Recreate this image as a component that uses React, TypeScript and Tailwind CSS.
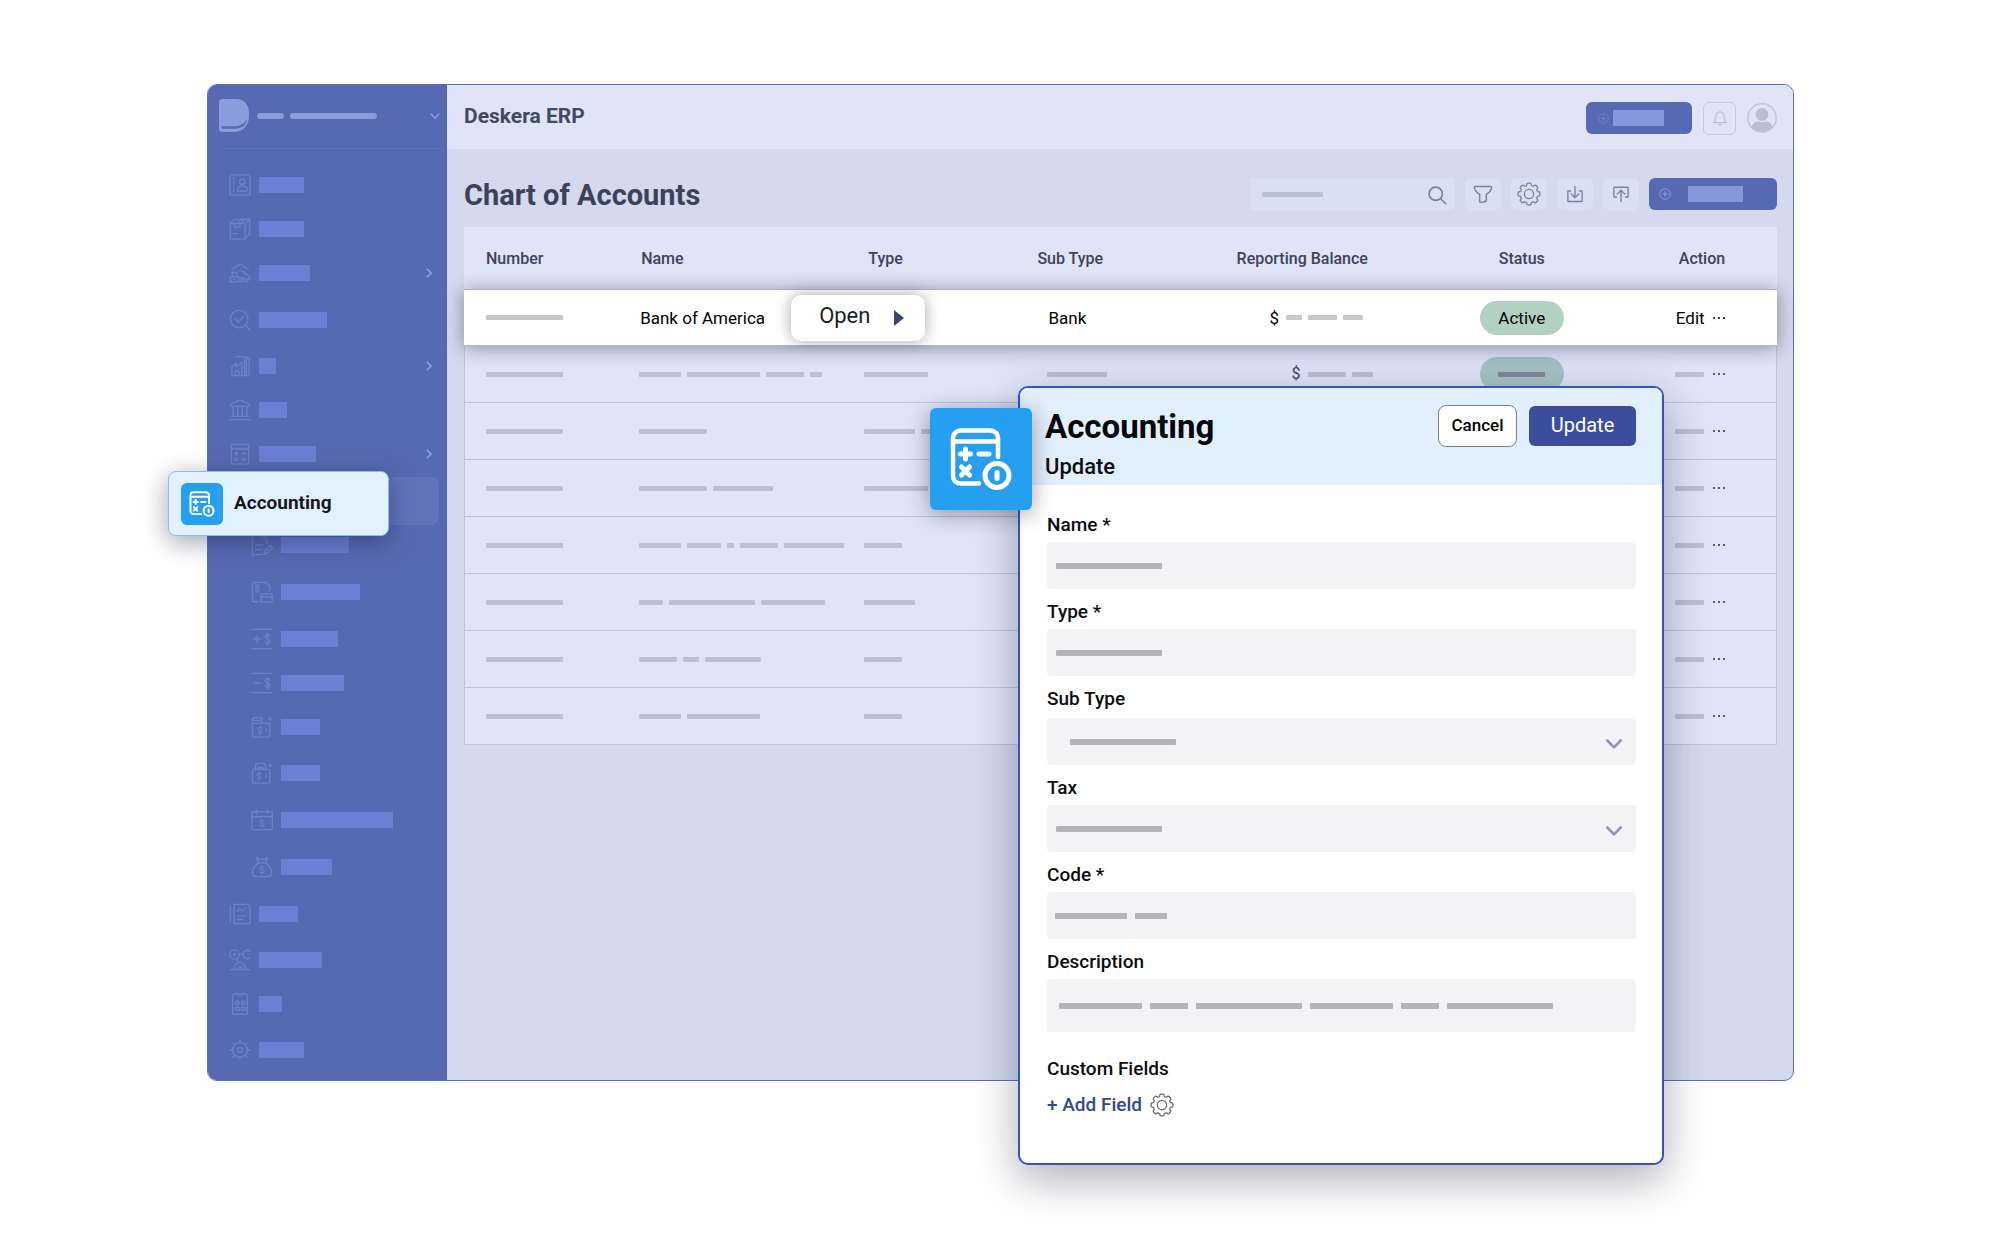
import type { ReactNode } from "react";

function Icon({ children, className = "size-[22px]", width = 1.5 }: { children: ReactNode; className?: string; width?: number }) {
  return (
    <svg
      viewBox="0 0 24 24"
      className={"shrink-0 " + className}
      fill="none"
      stroke="currentColor"
      strokeWidth={width}
      strokeLinecap="round"
      strokeLinejoin="round"
      aria-hidden="true"
    >
      {children}
    </svg>
  );
}

const dollar = (x: number, y: number) => (
  <path d={`M${x + 2} ${y - 2.2}c-1-1.4-4-1.2-4 .5s4 1.4 4 3.2-3 2-4 .5M${x} ${y - 4.5}v1.3M${x} ${y + 3}v1.3`} />
);

const contactIcon = (
  <>
    <rect x="1" y="1" width="22" height="22" rx="1.5" />
    <path d="M5 4v2M5 8v2M5 12v2M5 16v3" />
    <circle cx="14.5" cy="8.5" r="3" />
    <path d="M9.500 18.500v-2.500a3 3 0 0 1 3-2.500h4a3 3 0 0 1 3 2.500v2.500z" />
  </>
);
const boxIcon = (
  <>
    <rect x="1.500" y="6" width="16" height="17" rx="1" />
    <path d="M1.500 6 6 1.500h16.500L17.500 6M22.500 1.500v16L17.500 23M9 6l4-4.500M13 6l4-4.500M4.500 17h5" />
    <path d="M6 6v4h6V6" />
  </>
);
const assetsIcon = (
  <>
    <path d="M3 8l9-6 9 6" />
    <path d="M1 21.500v-5h2.500v-5h5v5H11v5zM3.500 16.500h5M5 19h1.500" />
    <path d="M11.500 10h4l3 3.500 3.500 1.500c1 .5 1 4 0 4h-1M13 17h4" />
    <circle cx="19" cy="20" r="1.800" />
    <circle cx="14" cy="20" r="1.500" />
  </>
);
const searchCheckIcon = (
  <>
    <circle cx="11" cy="11" r="9.500" />
    <path d="M18 18l5 5M6.500 11l3.500 3.500 6-6.500" />
  </>
);
const factoryIcon = (
  <path d="M3 22.500V13l5-4v4l6-5v14.500zM8 2.500c2-2 4-.5 6-.5h5v20.500h3V3.500h-3M17 5v17.500h-3M7 22.500v-5h4v5" />
);
const bankIcon = (
  <path d="M1 22.500h22M3 19h18M4.500 18.500v-10M9.500 18.500v-10M14.500 18.500v-10M19.500 18.500v-10M1 6.500c0-1 6-2.500 8-4 1-1.500 5-1.500 6 0 2 1.500 8 3 8 4s-1 1.500-2 1.500H3C2 8 1 7.500 1 6.500z" />
);
const calcIcon = (
  <>
    <rect x="2.500" y="1.500" width="19" height="21.500" rx="1" />
    <path d="M2.500 6.500h19M6 11.500h4M8 9.500v4M14 11.500h4M6.500 16.500l3 3M9.500 16.500l-3 3M14 18h4M16 16v4" />
  </>
);
const noteIcon = (
  <path d="M1.500 23V2.500a1 1 0 0 1 1-1h10l5 5v4M1.500 22.500h10M5 12h8M5 17h6M14 22.500l1-4 6-6 2.500 2.500-6 6z" />
);
const docCardIcon = (
  <>
    <path d="M8 22.500H3.500a2 2 0 0 1-2-2v-17a2 2 0 0 1 2-2h13l4 4V11" />
    {dollar(7, 8)}
    <rect x="11" y="14" width="12" height="9" rx="1" />
    <path d="M11 17.500h12" />
  </>
);
const creditIcon = (
  <path d="M1 1.500h22M1 22.500h22M3 12h7M6.500 8.500v7M21 9c-1-2.500-5.500-2-5.500.5s5.500 2.500 5.500 5-4.500 3-5.500.5M18.200 5.500v13.500" />
);
const debitIcon = (
  <path d="M1 1.500h22M1 22.500h22M3 12h7M21 9c-1-2.500-5.500-2-5.500.5s5.500 2.500 5.500 5-4.500 3-5.500.5M18.200 5.500v13.500" />
);
const walletIcon = (
  <>
    <rect x="1.500" y="8" width="19" height="15" rx="1.500" />
    <path d="M1.500 9V3.500l2-1.500H12v6M4 5h6M16.500 14v3M21 1.500v3M19.500 3h3" />
    {dollar(10, 15.5)}
  </>
);
const bagIcon = (
  <>
    <rect x="1.500" y="8" width="19" height="15" rx="1.500" />
    <path d="M5 8V3l2-1.500h7L16 3v5M8 8V6h5v2M16.500 14v3M21 2.500v3M19.500 4h3" />
    {dollar(9, 15.5)}
  </>
);
const calendarIcon = (
  <>
    <rect x="0.800" y="3" width="22.500" height="19.500" rx="1.500" />
    <path d="M.8 8.500h22.500M6 1v4M18 1v4" />
    {dollar(12, 15.5)}
  </>
);
const moneyBagIcon = (
  <>
    <path d="M6 1.500l2.500 2h7l2.500-2-2 6H8zM8 7.500c-3 2.500-6.500 7-6.500 10.500 0 3 2 4.500 4.500 4.500h12c2.500 0 4.500-1.500 4.500-4.500 0-3.500-3.500-8-6.500-10.500" />
    {dollar(12, 15)}
  </>
);
const reportIcon = (
  <>
    <path d="M1.500 3v18" />
    <path d="M5.500 1.500h15l2.500 3v18H5.500zM9 9l2.500-2.500 3 2 4-3M9 14h10M9 18h6" />
  </>
);
const robotIcon = (
  <>
    <circle cx="6" cy="6" r="5" />
    <circle cx="6" cy="6" r="1" />
    <path d="M11 6h4M23 2.500c-3-2.500-7.500-.5-7.500 3.500s4.500 6 7.500 3.500M1 22.500h22M6 22c0-5 3-7.500 6-7.500s6 2.500 6 7.500M8 11l3 4M10 22c0-4 4-4 4 0" />
  </>
);
const phoneIcon = (
  <>
    <rect x="4" y="0.800" width="16" height="22.500" rx="2" />
    <path d="M10 3.500h4" />
    <rect x="7" y="9" width="4" height="3.500" rx="1" />
    <rect x="13.500" y="9" width="4" height="3.500" rx="1" />
    <rect x="7" y="15.500" width="4" height="3.500" rx="1" />
    <rect x="13.500" y="15.500" width="4" height="3.500" rx="1" />
  </>
);
const sunGearIcon = (
  <>
    <circle cx="12" cy="12" r="8" />
    <circle cx="12" cy="12" r="2.800" />
    <path d="M12 1v3M12 20v3M1 12h3M20 12h3M4.200 4.200l2.200 2.200M17.600 17.600l2.200 2.200M19.800 4.200l-2.200 2.200M6.400 17.600l-2.200 2.200" />
  </>
);

type NavItem = { label: string; icon?: ReactNode; bar?: string; gap: string; sub?: boolean; more?: boolean; active?: boolean };

const navItems: NavItem[] = [
  { label: "Contacts", icon: contactIcon, bar: "w-[45px]", gap: "" },
  { label: "Products", icon: boxIcon, bar: "w-[45px]", gap: "mt-6" },
  { label: "Assets", icon: assetsIcon, bar: "w-[51px]", gap: "mt-6", more: true },
  { label: "Quality", icon: searchCheckIcon, bar: "w-[68px]", gap: "mt-[27px]" },
  { label: "Manufacturing", icon: factoryIcon, bar: "w-[17px]", gap: "mt-[26px]", more: true },
  { label: "Bank", icon: bankIcon, bar: "w-[28px]", gap: "mt-6" },
  { label: "Ledger", icon: calcIcon, bar: "w-[57px]", gap: "mt-6", more: true },
  { label: "Accounting", gap: "mt-[27px]", active: true },
  { label: "Journal", icon: noteIcon, bar: "w-[68px]", gap: "mt-6", sub: true },
  { label: "Statements", icon: docCardIcon, bar: "w-[79px]", gap: "mt-[27px]", sub: true },
  { label: "Credit notes", icon: creditIcon, bar: "w-[57px]", gap: "mt-[27px]", sub: true },
  { label: "Debit notes", icon: debitIcon, bar: "w-[63px]", gap: "mt-6", sub: true },
  { label: "Deposits", icon: walletIcon, bar: "w-[39px]", gap: "mt-6", sub: true },
  { label: "Expenses", icon: bagIcon, bar: "w-[39px]", gap: "mt-[26px]", sub: true },
  { label: "Scheduled payments", icon: calendarIcon, bar: "w-[112px]", gap: "mt-[27px]", sub: true },
  { label: "Budget", icon: moneyBagIcon, bar: "w-[51px]", gap: "mt-[27px]", sub: true },
  { label: "Reports", icon: reportIcon, bar: "w-[39px]", gap: "mt-[27px]" },
  { label: "Automation", icon: robotIcon, bar: "w-[63px]", gap: "mt-[26px]" },
  { label: "Apps", icon: phoneIcon, bar: "w-[23px]", gap: "mt-6" },
  { label: "Settings", icon: sunGearIcon, bar: "w-[45px]", gap: "mt-[26px]" },
];

function LedgerGlyph({ className }: { className: string }) {
  return (
    <svg viewBox="0 0 102 102" className={className} fill="none" stroke="#fff" strokeWidth="4.500" strokeLinecap="round" strokeLinejoin="round" aria-hidden="true">
      <path d="M68 49V30a7.500 7.500 0 0 0-7.500-7.500h-30A7.500 7.500 0 0 0 23 30v38a7.500 7.500 0 0 0 7.500 7.500H49" />
      <path d="M23 33.500h45" />
      <path d="M30.500 46h10M35.500 41v10M49 46h10M31.500 59l8 8M39.500 59l-8 8" strokeWidth="5" />
      <circle cx="67" cy="67.500" r="12" strokeWidth="5" />
      <path d="M67 64.500v6" strokeWidth="5" />
    </svg>
  );
}

function polar(radius: number, degrees: number) {
  const a = (degrees * Math.PI) / 180;
  return `${(12 + radius * Math.cos(a)).toFixed(2)} ${(12 + radius * Math.sin(a)).toFixed(2)}`;
}

const gearOutline =
  Array.from({ length: 8 }, (_, k) => {
    const t = k * 45;
    return `${k === 0 ? "M" : "L"}${polar(9, t - 15)}Q${polar(10.8, t - 13)} ${polar(11, t - 7)}L${polar(11, t + 7)}Q${polar(10.8, t + 13)} ${polar(9, t + 15)}Q${polar(8.3, t + 22.5)} ${polar(9, t + 30)}`;
  }).join("") + "Z";

function Gear({ className }: { className: string }) {
  return (
    <Icon className={className} width={1.3}>
      <path d={gearOutline} />
      <circle cx="12" cy="12" r="4.600" />
    </Icon>
  );
}

function PlusCircle({ className }: { className: string }) {
  return (
    <Icon className={className} width={2}>
      <circle cx="12" cy="12" r="10.500" />
      <path d="M12 7v10M7 12h10" />
    </Icon>
  );
}

function Sidebar() {
  return (
    <aside className="w-[239px] shrink-0 rounded-l-[9px] bg-[#5869b3] pb-5">
      <div className="ml-[11px] mr-[7px] flex h-16 items-center border-b border-[#6272ba] pb-0.5">
        <svg viewBox="0 0 30 33" className="h-[33px] w-[30px]" aria-label="Deskera" role="img">
          <path d="M3 0h14.500C24.500 0 30 6 30 13.500V17c0 9.500-6 16-15 16H3a3 3 0 0 1-3-3V3a3 3 0 0 1 3-3z" fill="#8b9bdd" />
          <path d="M2.500 27.300h14c5 0 9-3 11.500-7-.5 6-5.500 9.500-12.500 9.500H4.500c-2 0-2.500-1-2-2.500z" fill="#5869b3" />
        </svg>
        <span className="ml-2 h-1.5 w-[27px] rounded-full bg-[#8b9bdd]" />
        <span className="ml-1.5 h-1.5 w-[87px] rounded-full bg-[#8b9bdd]" />
        <button aria-label="Switch company" className="ml-auto text-[#8b9bdd]">
          <svg viewBox="0 0 10 6" className="h-1.5 w-2.5" fill="none" stroke="currentColor" strokeWidth="1.400" aria-hidden="true">
            <path d="M.7.7 5 5 9.300.7" />
          </svg>
        </button>
      </div>
      <nav aria-label="Main" className="pt-[26px]">
        <ul>
          {navItems.map((item) =>
            item.active ? (
              <li key={item.label} className={"relative h-5 " + item.gap}>
                <span className="absolute -top-3.5 left-3 right-2 h-12 rounded-lg bg-[#6373bb]" />
                <a
                  href="#accounting"
                  aria-current="page"
                  className="absolute -left-10 -top-5 z-20 flex h-[65px] w-[221px] items-center gap-[11px] rounded-lg border border-[#8fbbee] bg-[#e3f0fe] pl-3 text-[19px] font-bold text-[#15181f] shadow-[0_6px_26px_rgba(20,20,50,0.4)]"
                >
                  <span className="flex size-[42px] items-center justify-center rounded-md bg-[#269ff0]">
                    <LedgerGlyph className="size-[46px]" />
                  </span>
                  Accounting
                </a>
              </li>
            ) : (
              <li key={item.label} className={item.gap}>
                <a
                  href="#nav"
                  aria-label={item.label}
                  className={"flex h-5 items-center gap-2 pr-[15px] text-[#6f80ca] " + (item.sub ? "pl-[43px]" : "pl-[21px]")}
                >
                  <Icon>{item.icon}</Icon>
                  <span className={"h-4 bg-[#6c7fd3] " + item.bar} />
                  {item.more && (
                    <svg viewBox="0 0 6 10" className="ml-auto h-2.5 w-1.5" fill="none" stroke="#8f9fe2" strokeWidth="1.600" aria-hidden="true">
                      <path d="M.8.8 5 5 .8 9.200" />
                    </svg>
                  )}
                </a>
              </li>
            ),
          )}
        </ul>
      </nav>
    </aside>
  );
}

function TopBar() {
  return (
    <header className="flex h-16 items-center rounded-tr-[9px] bg-[#dfe4f7] pl-[17px] pr-4 pt-0.5">
      <p className="pb-1 text-[21px] leading-6 font-bold text-[#444962]">Deskera ERP</p>
      <button aria-label="Create" className="ml-auto flex h-8 w-[106px] items-center gap-1 rounded-md bg-[#5869b3] pl-3 text-[#7283cc]">
        <PlusCircle className="size-[11px]" />
        <span className="h-4 w-[51px] bg-[#8797dc]" />
      </button>
      <button aria-label="Notifications" className="ml-[11px] flex size-[33px] items-center justify-center rounded-md border border-[#c3c8dd] text-[#bbc0d6]">
        <Icon className="size-4" width={1.8}>
          <path d="M2.500 19h19c-2.500-2-3-4-3-9S16 3 12 3s-6.500 2-6.500 7-.5 7-3 9zM12 3V1M10 22h4" />
        </Icon>
      </button>
      <button aria-label="Account" className="ml-[11px]">
        <svg viewBox="0 0 30 30" className="size-[30px]" aria-hidden="true">
          <circle cx="15" cy="15" r="14.200" fill="none" stroke="#bfc4d8" strokeWidth="1.500" />
          <circle cx="15" cy="11.500" r="6.500" fill="#b9bed3" />
          <path d="M4.500 24c1.500-5 5-6 7-5.500 2 1 5 1 7 0 2-.5 5.500.5 7 5.500a13.800 13.800 0 0 1-21 0z" fill="#b9bed3" />
        </svg>
      </button>
    </header>
  );
}

function ToolButton({ label, children }: { label: string; children: ReactNode }) {
  return (
    <button aria-label={label} className="flex h-8 w-9 items-center justify-center rounded-md bg-[#dae0f4] text-[#7d829b]">
      {children}
    </button>
  );
}

function Toolbar() {
  return (
    <div className="flex items-center gap-2.5">
      <h1 className="mr-auto pt-0.5 text-[29px] leading-[30px] font-bold text-[#3e4259]">Chart of Accounts</h1>
      <div className="relative w-[205px]">
        <input aria-label="Search accounts" className="block h-8 w-full rounded-sm bg-[#dae0f4] px-3 outline-none" />
        <span className="pointer-events-none absolute left-3 top-3.5 h-[5px] w-[61px] rounded-[1px] bg-[#babfd4]" />
        <span className="pointer-events-none absolute right-2 top-[7px] text-[#7d829b]">
          <Icon className="size-5" width={2}>
            <circle cx="10.500" cy="10.500" r="8" />
            <path d="M16.500 16.500l6 6" />
          </Icon>
        </span>
      </div>
      <ToolButton label="Filter">
        <Icon className="size-5" width={1.8}>
          <path d="M2.500 3h19a.8.8 0 0 1 .8.800c0 4-2.300 6-6.300 8.700V20c-2.500 2-6 2.500-8 1.500v-9C4 9.800 1.700 7.800 1.700 3.800a.8.8 0 0 1 .8-.8z" />
        </Icon>
      </ToolButton>
      <ToolButton label="Settings">
        <Gear className="size-6" />
      </ToolButton>
      <ToolButton label="Download">
        <Icon className="size-[18px]" width={1.8}>
          <path d="M6 8H2.500v14h19V8H18M12 2v15M7 12l5 5 5-5" />
        </Icon>
      </ToolButton>
      <ToolButton label="Upload">
        <Icon className="size-[18px]" width={1.8}>
          <path d="M6 16H2.500V3h19v13H18M12 22V7M7 12l5-5 5 5" />
        </Icon>
      </ToolButton>
      <button aria-label="New account" className="flex h-8 w-32 items-center gap-[17px] rounded-md bg-[#5869b3] pl-2.5 text-[#8b9bdd]">
        <PlusCircle className="size-3" />
        <span className="h-4 w-[55px] bg-[#8797dc]" />
      </button>
    </div>
  );
}

function Bars({ widths, className }: { widths: string[]; className: string }) {
  return (
    <span className="flex items-center gap-1.5">
      {widths.map((w, i) => (
        <span key={i} className={"h-[5px] rounded-[1px] " + w + " " + className} />
      ))}
    </span>
  );
}

const rows: { name: string[]; type: string[] }[] = [
  { name: ["w-[42px]", "w-[73px]", "w-[38px]", "w-3"], type: ["w-16"] },
  { name: ["w-[68px]"], type: ["w-[51px]", "w-[38px]"] },
  { name: ["w-[68px]", "w-[60px]"], type: ["w-16"] },
  { name: ["w-[42px]", "w-[34px]", "w-[7px]", "w-[38px]", "w-[60px]"], type: ["w-[38px]"] },
  { name: ["w-6", "w-[86px]", "w-16"], type: ["w-[51px]"] },
  { name: ["w-[38px]", "w-4", "w-14"], type: ["w-[38px]"] },
  { name: ["w-[42px]", "w-[73px]"], type: ["w-[38px]"] },
];

const muted = "bg-[#babfd4]";

function Dots() {
  return (
    <svg viewBox="0 0 12 2" className="h-0.5 w-3" fill="currentColor" aria-hidden="true">
      <circle cx="1" cy="1" r="1" />
      <circle cx="6" cy="1" r="1" />
      <circle cx="11" cy="1" r="1" />
    </svg>
  );
}

function AccountsTable() {
  return (
    <table className="mt-[17px] w-full table-fixed border-separate border-spacing-0 bg-[#dfe4f7] text-left text-black">
      <colgroup>
        <col className="w-[175px]" />
        <col className="w-[225px]" />
        <col className="w-[165px]" />
        <col className="w-[207px]" />
        <col className="w-[203px]" />
        <col className="w-[164px]" />
        <col className="w-[173px]" />
      </colgroup>
      <thead>
        <tr className="h-[62px] text-base text-[#3e4259] [&>th]:p-0 [&>th]:pt-0.5 [&>th]:font-medium">
          <th className="[&&]:pl-[22px]">Number</th>
          <th className="[&&]:pl-0.5">Name</th>
          <th className="[&&]:pl-1">Type</th>
          <th className="[&&]:pl-2">Sub Type</th>
          <th>Reporting Balance</th>
          <th className="text-center">Status</th>
          <th className="[&&]:pl-[75px]">Action</th>
        </tr>
      </thead>
      <tbody>
        <tr className="relative z-10 h-[57px] bg-white text-[17px] leading-6 shadow-[0_2px_18px_rgba(30,30,70,0.45)] [&>td]:border-y [&>td]:border-[#b3b4c6] [&>td]:p-0">
          <td className="[&&]:pl-[22px]">
            <Bars widths={["w-[77px]"]} className="bg-[#c6c6c6]" />
          </td>
          <td className="relative whitespace-nowrap [&&]:pl-px">
            Bank of America
            <button className="absolute left-[152px] top-[5px] flex h-[46px] w-[134px] items-center justify-between rounded-[10px] bg-white pb-1 pl-7 pr-[21px] text-[22px] text-[#1b1d22] shadow-[0_0_16px_rgba(0,0,0,0.35)]">
              Open
              <svg viewBox="0 0 10 16" className="mt-1 h-4 w-2.5" fill="#3b4670" aria-hidden="true">
                <path d="M0 0l10 8-10 8z" />
              </svg>
            </button>
          </td>
          <td />
          <td className="[&&]:pl-[19px]">Bank</td>
          <td className="[&&]:pl-[33px]">
            <span className="flex items-center gap-[7px]">
              $
              <Bars widths={["w-4", "w-[29px]", "w-5"]} className="bg-[#c9c9c9]" />
            </span>
          </td>
          <td>
            <span className="mx-auto flex h-[34px] w-[84px] items-center justify-center rounded-full bg-[#b3d1c2]">Active</span>
          </td>
          <td className="[&&]:pl-[72px]">
            <span className="flex items-center gap-2">
              <button>Edit</button>
              <button aria-label="More actions">
                <Dots />
              </button>
            </span>
          </td>
        </tr>
        {rows.map((row, i) => (
          <tr key={i} className="h-[57px] text-base [&>td]:border-b [&>td]:border-[#bec3da] [&>td]:p-0">
            <td className="border-l [&&]:pl-[21px]">
              <Bars widths={["w-[77px]"]} className={muted} />
            </td>
            <td>
              <Bars widths={row.name} className={muted} />
            </td>
            <td>
              <Bars widths={row.type} className={muted} />
            </td>
            <td className="[&&]:pl-[18px]">
              <Bars widths={["w-[60px]"]} className={muted} />
            </td>
            <td className="[&&]:pl-[55px]">
              <span className="flex items-center gap-[7px] text-[#3e4259]">
                $
                <Bars widths={["w-[38px]", "w-[21px]"]} className={muted} />
              </span>
            </td>
            <td>
              <span className="mx-auto flex h-[34px] w-[84px] items-center justify-center rounded-full bg-[#a6c2c6]">
                <span className="h-[5px] w-[47px] rounded-[1px] bg-[#80879b]" />
              </span>
            </td>
            <td className="border-r [&&]:pl-[71px]">
              <span className="flex items-center gap-[9px] text-[#2b2e3d]">
                <span className="h-[5px] w-[29px] rounded-[1px] bg-[#babfd4]" />
                <button aria-label="More actions">
                  <Dots />
                </button>
              </span>
            </td>
          </tr>
        ))}
      </tbody>
    </table>
  );
}

function FieldBars({ widths, left }: { widths: string[]; left: string }) {
  return (
    <span className={"pointer-events-none absolute inset-y-0 flex items-center gap-2 " + left}>
      {widths.map((w, i) => (
        <span key={i} className={"h-1.5 rounded-[1px] bg-[#b4b4b6] " + w} />
      ))}
    </span>
  );
}

function Field({
  id,
  label,
  widths,
  left = "left-[9px]",
  select = false,
  className = "mt-[11px] gap-[5px]",
  height = "h-[47px]",
}: {
  id: string;
  label: string;
  widths: string[];
  left?: string;
  select?: boolean;
  className?: string;
  height?: string;
}) {
  const box = "block w-full rounded-sm bg-[#f3f3f5] px-3 outline-none " + height;
  return (
    <div className={"flex flex-col " + className}>
      <label htmlFor={id}>{label}</label>
      <div className="relative">
        {select ? (
          <select id={id} className={"appearance-none " + box}>
            <option value="" />
          </select>
        ) : (
          <input id={id} className={box} />
        )}
        <FieldBars widths={widths} left={left} />
        {select && (
          <span className="pointer-events-none absolute inset-y-0 right-3.5 flex items-center pt-1">
            <svg viewBox="0 0 16 10" className="h-2.5 w-4" fill="none" stroke="#9791b3" strokeWidth="2.600" strokeLinecap="round" aria-hidden="true">
              <path d="M1.300 1.500 8 8.300l6.700-6.800" />
            </svg>
          </span>
        )}
      </div>
    </div>
  );
}

function UpdateDialog() {
  return (
    <section
      role="dialog"
      aria-labelledby="dialog-title"
      className="absolute right-[129px] top-[301px] z-30 w-[646px] rounded-[10px] border-2 border-[#3950c6] bg-white shadow-[0_14px_44px_rgba(20,20,50,0.35)]"
    >
      <span className="absolute -left-[90px] top-5 flex size-[102px] items-center justify-center rounded-md bg-[#269ff0] shadow-[0_4px_22px_rgba(20,20,50,0.4)]">
        <LedgerGlyph className="size-[102px]" />
      </span>
      <header className="flex h-[97px] items-start justify-between rounded-t-lg bg-[#e2effd] pl-[25px] pr-[26px] pt-[17px]">
        <div>
          <h2 id="dialog-title" className="text-[33px] leading-[44px] font-bold text-[#05070a]">
            Accounting
          </h2>
          <p className="text-[22px] leading-9 font-medium text-[#0b0d12]">Update</p>
        </div>
        <div className="flex items-center gap-3">
          <button className="h-[42px] w-[79px] rounded-lg border border-[#7b7f88] bg-white text-[17px] font-medium text-black">Cancel</button>
          <button className="h-10 w-[107px] rounded-md bg-[#3b4d9b] pb-0.5 text-xl text-white">Update</button>
        </div>
      </header>
      <form className="pb-[46px] pl-[27px] pr-[26px] pt-7 text-[19px] leading-6 font-medium text-[#0b0c0f]">
        <Field id="name" label="Name *" widths={["w-[106px]"]} className="gap-[5px]" />
        <Field id="type" label="Type *" widths={["w-[106px]"]} />
        <Field id="subtype" label="Sub Type" widths={["w-[106px]"]} left="left-[23px]" select className="mt-[11px] gap-[7px]" />
        <Field id="tax" label="Tax" widths={["w-[106px]"]} select />
        <Field id="code" label="Code *" widths={["w-[72px]", "w-8"]} left="left-2" />
        <Field
          id="description"
          label="Description"
          widths={["w-[83px]", "w-[38px]", "w-[106px]", "w-[83px]", "w-[38px]", "w-[106px]"]}
          left="left-3"
          height="h-[53px]"
        />
        <p className="mt-[25px]">Custom Fields</p>
        <div className="mt-3 flex items-center gap-2">
          <button type="button" className="text-[#36468f]">
            + Add Field
          </button>
          <button type="button" aria-label="Custom field settings" className="text-[#6b6d75]">
            <Gear className="size-6" />
          </button>
        </div>
      </form>
    </section>
  );
}

export default function App() {
  return (
    <div className="min-h-screen bg-white pb-[170px] pl-[207px] pr-[206px] pt-[84px] font-['Roboto',sans-serif]">
      <div className="relative flex rounded-[10px] border border-[#5b6dc4] bg-[#d4d9ed]">
        <Sidebar />
        <div className="min-w-0 flex-1">
          <TopBar />
          <main className="pl-[17px] pr-4 pt-[29px]">
            <Toolbar />
            <AccountsTable />
          </main>
        </div>
        <UpdateDialog />
      </div>
    </div>
  );
}
